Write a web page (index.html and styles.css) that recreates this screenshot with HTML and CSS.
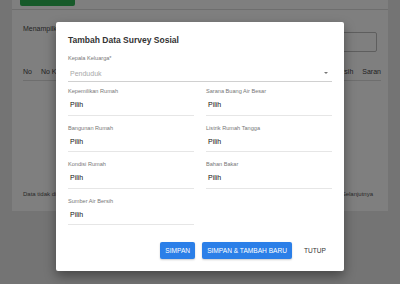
FILE: index.html
```html
<!DOCTYPE html>
<html lang="id">
<head>
<meta charset="utf-8">
<title>Survey Sosial</title>
<link rel="stylesheet" href="styles.css">
</head>
<body>
<div class="page">
  <div class="card">
    <div class="toolbar">
      <button class="btn-green">TAMBAH</button>
    </div>
    <div class="controls">
      <div class="show">Menampilkan 10 entri</div>
      <div class="search"></div>
    </div>
    <div class="thead">
      <span>No</span>
      <span>No KK</span>
      <span class="push">Air Bersih</span>
      <span>Saran</span>
    </div>
    <div class="tbody"></div>
    <div class="tfoot">
      <span>Data tidak ditemukan</span>
      <span>Sebelumnya&nbsp;&nbsp;Selanjutnya</span>
    </div>
  </div>
</div>

<div class="overlay">
  <div class="modal">
    <h2 class="title">Tambah Data Survey Sosial</h2>
    <div class="select">
      <div class="label">Kepala Keluarga*</div>
      <div class="select-row">
        <span class="placeholder">Penduduk</span>
        <span class="caret"></span>
      </div>
    </div>
    <div class="grid">
      <div class="field"><div class="label">Kepemilikan Rumah</div><div class="value">Pilih</div></div>
      <div class="field"><div class="label">Sarana Buang Air Besar</div><div class="value">Pilih</div></div>
      <div class="field"><div class="label">Bangunan Rumah</div><div class="value">Pilih</div></div>
      <div class="field"><div class="label">Listrik Rumah Tangga</div><div class="value">Pilih</div></div>
      <div class="field"><div class="label">Kondisi Rumah</div><div class="value">Pilih</div></div>
      <div class="field"><div class="label">Bahan Bakar</div><div class="value">Pilih</div></div>
      <div class="field"><div class="label">Sumber Air Bersih</div><div class="value">Pilih</div></div>
    </div>
    <div class="actions">
      <button class="btn">SIMPAN</button>
      <button class="btn">SIMPAN &amp; TAMBAH BARU</button>
      <button class="btn-text">TUTUP</button>
    </div>
  </div>
</div>
</body>
</html>
```

FILE: styles.css
```css
* { box-sizing: border-box; }
html, body { margin: 0; padding: 0; }
body {
  width: 400px;
  height: 284px;
  overflow: hidden;
  background: #e9e9e9;
  font-family: "Liberation Sans", Arial, Helvetica, sans-serif;
  position: relative;
}
.page { padding: 0 12px; }
.card {
  background: #fff;
  margin-top: -16px;
}
.toolbar {
  padding: 0 8px 3px;
  border-bottom: 1px solid #dcdcdc;
}
.btn-green {
  display: block;
  width: 55px;
  height: 22px;
  border: 0;
  border-radius: 2px;
  background: #2fb554;
  color: #fff;
  font: 6px/8px "Liberation Sans", Arial, sans-serif;
  padding: 0;
}
.controls {
  display: flex;
  justify-content: space-between;
  align-items: flex-start;
  padding: 0 11px;
}
.show {
  margin-top: 13.5px;
  font-size: 7px;
  line-height: 9px;
  color: #4a4a4a;
}
.search {
  margin-top: 22px;
  width: 112px;
  height: 20px;
  border: 1px solid #bdbdbd;
  border-radius: 2px;
}
.thead {
  display: flex;
  gap: 9px;
  margin: 14.5px 7px 0 11px;
  padding-bottom: 4.5px;
  border-bottom: 1px solid #dcdcdc;
  font-size: 7px;
  line-height: 9px;
  color: #444;
}
.thead .push { margin-left: auto; }
.tbody { height: 108.5px; }
.tfoot {
  display: flex;
  justify-content: space-between;
  padding: 0 15px 12.5px 11px;
  font-size: 6px;
  line-height: 9px;
  color: #555;
}

.overlay {
  position: absolute;
  inset: 0;
  background: rgba(0, 0, 0, 0.5);
  display: flex;
  justify-content: center;
  align-items: flex-start;
  padding-top: 22px;
}
.modal {
  width: 288px;
  background: #fff;
  border-radius: 2px;
  padding: 12px 12px 12.5px;
  box-shadow: 0 5px 12px rgba(0, 0, 0, 0.4);
}
.title {
  margin: 0;
  font-size: 8.5px;
  line-height: 12px;
  font-weight: bold;
  color: #333;
}
.label {
  font-size: 5.6px;
  line-height: 7px;
  color: #777;
}
.select {
  margin-top: 9px;
  padding-bottom: 3.5px;
  border-bottom: 1px solid #d0d0d0;
}
.select-row {
  margin-top: 6.5px;
  display: flex;
  justify-content: space-between;
  align-items: center;
  padding: 0 4px 0 2px;
  height: 9px;
}
.placeholder {
  font-size: 7px;
  line-height: 9px;
  color: #a8a8a8;
}
.caret {
  width: 0;
  height: 0;
  border-left: 2px solid transparent;
  border-right: 2px solid transparent;
  border-top: 2.5px solid #777;
}
.grid {
  display: grid;
  grid-template-columns: 1fr 1fr;
  column-gap: 12px;
  row-gap: 9px;
  margin-top: 6px;
}
.field {
  padding-bottom: 5.5px;
  border-bottom: 1px solid #e6e6e6;
}
.value {
  margin-top: 5px;
  padding-left: 2px;
  font-size: 7px;
  line-height: 9px;
  color: #111;
}
.actions {
  display: flex;
  justify-content: flex-end;
  gap: 7px;
  margin-top: 17px;
  padding-right: 1px;
}
.btn, .btn-text {
  height: 16.5px;
  padding: 0 5px;
  border: 0;
  border-radius: 2px;
  font-family: "Liberation Sans", Arial, sans-serif;
  font-size: 6.6px;
}
.btn {
  background: #2b7fe8;
  color: #fff;
  box-shadow: 0 1px 2px rgba(0, 0, 0, 0.2);
}
.btn-text {
  background: transparent;
  color: #333;
}
```
